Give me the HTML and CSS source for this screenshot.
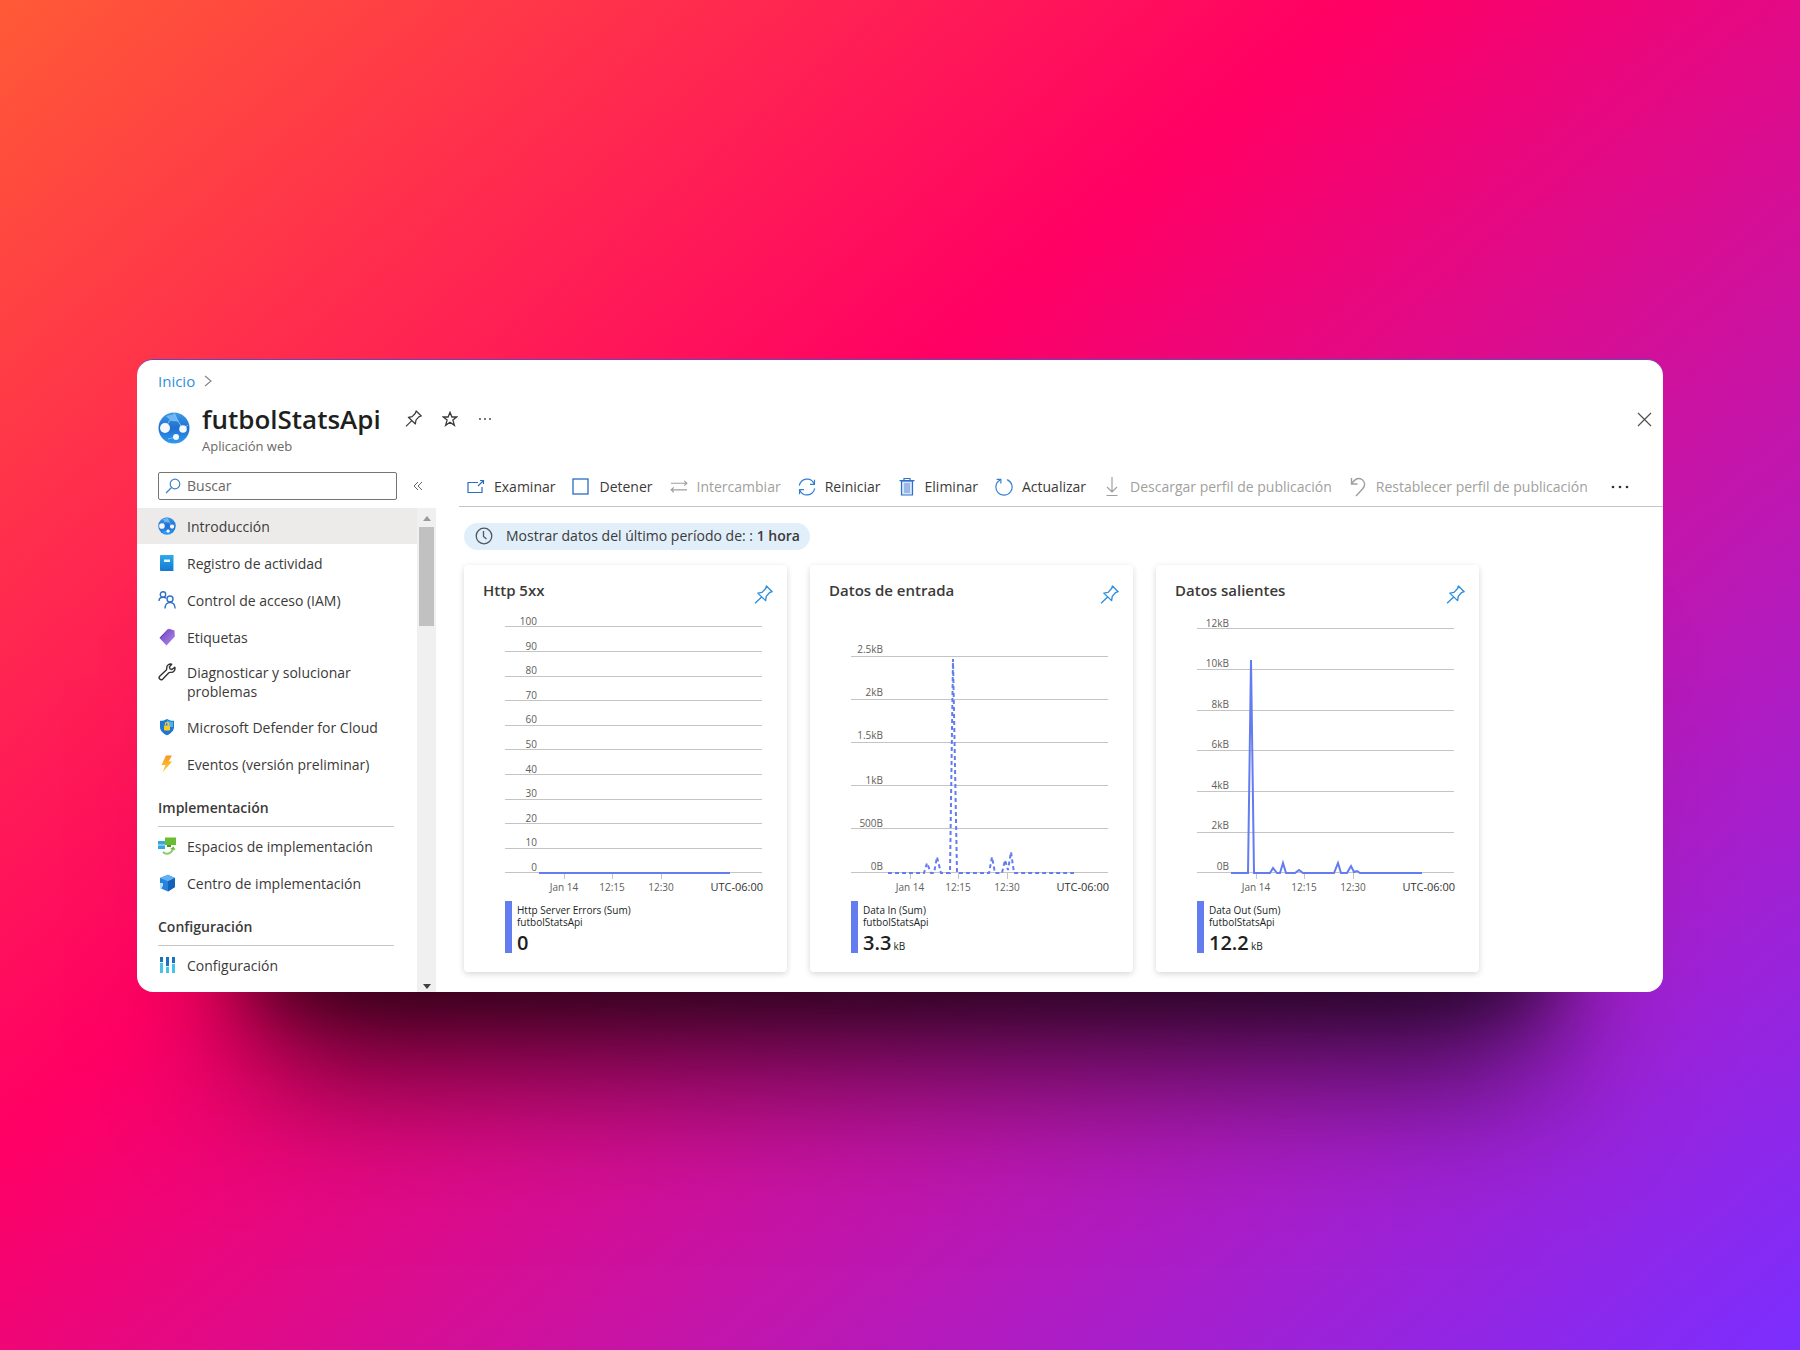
FILE: index.html
```html
<!DOCTYPE html>
<html lang="es">
<head>
<meta charset="utf-8">
<meta name="viewport" content="width=device-width, initial-scale=1">
<title>futbolStatsApi</title>
<link rel="stylesheet" href="styles.css">
</head>
<body>
<svg class="defs" width="0" height="0" aria-hidden="true">
  <defs>
    <linearGradient id="g-globe" x1="0" y1="0" x2="0" y2="1"><stop offset="0" stop-color="#3d9be6"/><stop offset=".5" stop-color="#1f6fd0"/><stop offset="1" stop-color="#2f9af0"/></linearGradient>
    <linearGradient id="g-book" x1="0" y1="0" x2="0" y2="1"><stop offset="0" stop-color="#2fa9ea"/><stop offset="1" stop-color="#1478cf"/></linearGradient>
    <linearGradient id="g-tag" x1="0" y1="0" x2="1" y2="1"><stop offset="0" stop-color="#6a3fc0"/><stop offset="1" stop-color="#b48be8"/></linearGradient>
    <linearGradient id="g-bolt" x1="0" y1="0" x2="0" y2="1"><stop offset="0" stop-color="#f8961e"/><stop offset="1" stop-color="#ffd23c"/></linearGradient>
    <symbol id="globe" viewBox="0 0 32 32">
      <circle cx="16" cy="16" r="15.500" fill="url(#g-globe)"/>
      <path d="M8 4 12 8 20 9 17 2z" fill="#6fb6f2"/>
      <path d="M7 16 12 8 20 9 25 17M16 1l4 8M25 17l5-4M18 25l-8 2" fill="none" stroke="#7fc0f6" stroke-width="1"/>
      <circle cx="7" cy="16" r="5" fill="#f4f8fd"/><circle cx="25" cy="17" r="3.800" fill="#f4f8fd"/><circle cx="18" cy="25" r="3" fill="#f4f8fd"/>
    </symbol>
    <symbol id="pin" viewBox="0 0 18 18">
      <path d="M1 17.300 7 11.500M11.800 1 17.200 6.300 14.600 7.300 11.600 10.800 11 14.800 3.600 7.700 7.600 7 11 3.400z" fill="none" stroke="currentColor" stroke-width="1.300" stroke-linejoin="round"/>
    </symbol>
  </defs>
</svg>

<main class="window">
  <header class="header">
    <nav class="crumbs" aria-label="Ruta">
      <a href="#">Inicio</a>
      <svg width="8" height="12" viewBox="0 0 8 12"><path d="M1 1l6 5-6 5" fill="none" stroke="#8a8886" stroke-width="1.200"/></svg>
    </nav>
    <div class="heading">
      <svg class="heading-logo" width="32" height="32"><use href="#globe"/></svg>
      <div class="heading-text">
        <div class="title-row">
          <h1>futbolStatsApi</h1>
          <div class="title-tools">
            <button type="button" aria-label="Anclar"><svg width="17" height="17"><use href="#pin"/></svg></button>
            <button type="button" aria-label="Favorito"><svg width="16" height="16" viewBox="0 0 16 16"><path d="M8 1.300 9.900 6h4.800l-3.800 3.100 1.500 5.200L8 11.200l-4.400 3.100 1.500-5.200L1.300 6h4.800z" fill="none" stroke="currentColor" stroke-width="1.300"/></svg></button>
            <button type="button" aria-label="Más"><svg width="14" height="4" viewBox="0 0 14 4"><g fill="currentColor"><circle cx="2" cy="2" r=".9"/><circle cx="7" cy="2" r=".9"/><circle cx="12" cy="2" r=".9"/></g></svg></button>
          </div>
        </div>
        <p class="subtitle">Aplicación web</p>
      </div>
      <button type="button" class="close" aria-label="Cerrar"><svg width="15" height="15" viewBox="0 0 15 15"><path d="M1 1l13 13M14 1 1 14" stroke="currentColor" stroke-width="1.200"/></svg></button>
    </div>
  </header>

  <div class="body">
    <aside class="sidebar">
      <div class="search-row">
        <label class="search">
          <svg width="16" height="16" viewBox="0 0 16 16"><path d="M1 15l5.500-5.500" stroke="#3b82d0" stroke-width="1.300"/><circle cx="10" cy="6" r="4.800" fill="none" stroke="#3b82d0" stroke-width="1.200"/></svg>
          <input type="search" placeholder="Buscar" aria-label="Buscar">
        </label>
        <button type="button" class="collapse" aria-label="Contraer"><svg width="10" height="10" viewBox="0 0 10 10"><path d="M5 1 1 5l4 4M9 1 5 5l4 4" fill="none" stroke="currentColor" stroke-width="1"/></svg></button>
      </div>
      <div class="nav-area">
        <nav class="menu" aria-label="Menú del recurso">
          <a href="#" class="item active"><svg width="18" height="18"><use href="#globe"/></svg>Introducción</a>
          <a href="#" class="item"><svg width="18" height="18" viewBox="0 0 18 18"><path d="M3 1h12v16H3a1 1 0 0 1-1-1V2a1 1 0 0 1 1-1z" fill="url(#g-book)"/><path d="M15 1h1v16h-1z" fill="#8fd0f5"/><path d="M6 5.500h6v2.500H6z" fill="#e6f4fd"/></svg>Registro de actividad</a>
          <a href="#" class="item"><svg width="18" height="18" viewBox="0 0 18 18"><g fill="none" stroke="#2f6fc8" stroke-width="1.400"><circle cx="5" cy="3.500" r="2.700"/><path d="M1 10c0-2.500 1.500-3.800 4-3.800 1.500 0 2.500.4 3 1"/><circle cx="12" cy="8" r="3"/><path d="M7 17.500c0-3.700 1.800-6 5-6s5 2.300 5.200 6"/></g></svg>Control de acceso (IAM)</a>
          <a href="#" class="item"><svg width="18" height="18" viewBox="0 0 18 18"><path d="M11 .8l5.500 1.700.3 6L8.500 17.500 1.500 10z" fill="url(#g-tag)"/><path d="M11 .8 3 9.500 1.500 10 9.500 1.500z" fill="#4f2a9c"/></svg>Etiquetas</a>
          <a href="#" class="item"><svg width="18" height="18" viewBox="0 0 18 18"><path d="M16.800 4.200 14 6.500l-2-.6-.6-2L13.700 1.200C11.500.5 8.500 2 8.700 5.300c0 .9.1 1.200-.4 1.700L1.700 13.300c-1.700 1.800 1 4.700 2.900 2.900l6.200-6.400c.6-.6 1-.5 1.800-.4 3.400.2 4.900-2.700 4.200-5.200z" fill="none" stroke="#323130" stroke-width="1.400" stroke-linejoin="round"/></svg>Diagnosticar y solucionar problemas</a>
          <a href="#" class="item"><svg width="18" height="18" viewBox="0 0 18 18"><path d="M9 1c2 1.300 4.300 1.800 7 1.800V9c0 4-3.500 6.700-7 8.300C5.500 15.700 2 13 2 9V2.800C4.700 2.800 7 2.300 9 1z" fill="#1f78cf"/><path d="M9 2.200c1.800 1 3.800 1.500 6 1.600V9H9z" fill="#4fb3ee"/><rect x="6" y="7.500" width="6" height="5" rx="1" fill="#ffca28"/><path d="M7.300 7.500V6.300a1.700 1.700 0 0 1 3.400 0v1.200" fill="none" stroke="#ffca28" stroke-width="1.200"/></svg>Microsoft Defender for Cloud</a>
          <a href="#" class="item"><svg width="18" height="18" viewBox="0 0 18 18"><path d="M8 .5h6L10.500 6.500H14L4.500 17.500 7.500 10H3.500z" fill="url(#g-bolt)"/></svg>Eventos (versión preliminar)</a>
          <h2>Implementación</h2>
          <a href="#" class="item"><svg width="18" height="18" viewBox="0 0 18 18"><path d="M0 4h7v8H0z" fill="#35a7e3"/><path d="M0 7.500h7v1H0z" fill="#c5e8f8"/><path d="M7 .5h11v7.500H7z" fill="#69bd35"/><path d="M9 8h4v2H9z" fill="#4b9a25"/><path d="M5 15c2.500 2.800 8.500 2.300 10-3.500" fill="none" stroke="#8fcb6c" stroke-width="2"/><path d="M12 12l3.500-2.500L17.500 13z" fill="#69bd35"/></svg>Espacios de implementación</a>
          <a href="#" class="item"><svg width="18" height="18" viewBox="0 0 18 18"><path d="M10 .8 17 4v9l-7 4.500L2 14V4z" fill="#2583dc"/><path d="M10 .8 17 4 10 7.200 2 4z" fill="#62b2f3"/><path d="M10 7.200 17 4v9l-7 4.500z" fill="#1560b8"/><path d="M2 9h3v3.500H4v2L2 14z" fill="#b7dcfa"/></svg>Centro de implementación</a>
          <h2>Configuración</h2>
          <a href="#" class="item"><svg width="18" height="18" viewBox="0 0 18 18"><path d="M2 1h3v16H2zM8 1h3v16H8zM14 1h3v16h-3z" fill="#45c3e8"/><path d="M2 1h3v5H2zM8 1h3v9H8zM14 1h3v6h-3z" fill="#1a72b8"/><path d="M2 6h3v1H2zM8 10h3v1H8zM14 7h3v1h-3z" fill="#d9f1fa"/></svg>Configuración</a>
        </nav>
        <div class="scrollbar" aria-hidden="true">
          <span class="arrow-up"></span>
          <span class="thumb"></span>
          <span class="arrow-down"></span>
        </div>
      </div>
    </aside>

    <section class="main">
      <div class="toolbar" role="toolbar" aria-label="Comandos">
        <button type="button"><svg width="18" height="18" viewBox="0 0 18 18"><path d="M11 4.500H1v10h14V9M11 8l5-5M13 2.500H16.500V6" fill="none" stroke="#2b6cc4" stroke-width="1.200"/></svg>Examinar</button>
        <button type="button"><svg width="18" height="18" viewBox="0 0 18 18"><rect x="1" y="1" width="15" height="15" fill="none" stroke="#2b6cc4" stroke-width="1.300"/></svg>Detener</button>
        <button type="button" disabled><svg width="19" height="18" viewBox="0 0 19 18"><path d="M1 5h17M15 2.500 17.800 5 15 7.500M18 12H1M4 9.500 1.200 12 4 14.500" fill="none" stroke="currentColor" stroke-width="1.200"/></svg>Intercambiar</button>
        <button type="button"><svg width="20" height="20" viewBox="0 0 20 20"><path d="M1.500 8.500C3 .5 14-2 18 6.500M18.300 2v5h-5M18.500 11.500C17 19.500 6 22 2 13.500M1.700 18v-5h5" fill="none" stroke="#2f7fd6" stroke-width="1.300"/></svg>Reiniciar</button>
        <button type="button"><svg width="16" height="20" viewBox="0 0 16 20"><path d="M2.500 4h11v14h-11z" fill="#d6e6f8" stroke="#2f6fc8" stroke-width="1.200"/><path d="M.5 3.700h15M5 3.500V1.500h6v2" fill="none" stroke="#2f6fc8" stroke-width="1.200"/><path d="M5 6v10h6V6z" fill="#9db8ea"/></svg>Eliminar</button>
        <button type="button"><svg width="20" height="20" viewBox="0 0 20 20"><path d="M13.500 1.800A9 9 0 1 1 5.500 2.300M1.800 1.500h4.700v4.700" fill="none" stroke="#2f7fd6" stroke-width="1.300"/></svg>Actualizar</button>
        <button type="button" disabled><svg width="14" height="20" viewBox="0 0 14 20"><path d="M7 0v15M2 10l5 5 5-5M1.500 18.500h11" fill="none" stroke="currentColor" stroke-width="1.200"/></svg>Descargar perfil de publicación</button>
        <button type="button" disabled><svg width="16" height="20" viewBox="0 0 16 20"><path d="M1.500 1v6h6M1.700 6.500C5 2 9 .5 12 2.500c3.500 2.500 3.300 6.500.5 9.500L6 19" fill="none" stroke="currentColor" stroke-width="1.400"/></svg>Restablecer perfil de publicación</button>
        <button type="button" class="more" aria-label="Más comandos"><svg width="20" height="4" viewBox="0 0 20 4"><g fill="#323130"><circle cx="4" cy="2" r="1.300"/><circle cx="11" cy="2" r="1.300"/><circle cx="18" cy="2" r="1.300"/></g></svg></button>
      </div>

      <div class="content">
        <button type="button" class="range">
          <svg width="18" height="18" viewBox="0 0 18 18"><circle cx="9" cy="9" r="7.800" fill="none" stroke="#51565c" stroke-width="1.300"/><path d="M8.500 4v5.500l3 2.500" fill="none" stroke="#51565c" stroke-width="1.300"/></svg>
          <span>Mostrar datos del último período de: : <b>1 hora</b></span>
        </button>

        <div class="cards">
          <article class="card">
            <header><h3>Http 5xx</h3><button type="button" aria-label="Anclar gráfico"><svg width="19" height="19"><use href="#pin"/></svg></button></header>
            <svg class="chart" viewBox="0 0 323 286" role="img" aria-label="Http Server Errors">
              <path class="grid" d="M41 16.500h257M41 41.500h257M41 66.500h257M41 90.500h257M41 115.500h257M41 139.500h257M41 164.500h257M41 189.500h257M41 213.500h257M41 238.500h257M41 262.500h257M100.500 263v6M148.500 263v6M197.500 263v6"/>
              <g class="ylab"><text x="73" y="15">100</text><text x="73" y="40">90</text><text x="73" y="64">80</text><text x="73" y="89">70</text><text x="73" y="113">60</text><text x="73" y="138">50</text><text x="73" y="163">40</text><text x="73" y="187">30</text><text x="73" y="212">20</text><text x="73" y="236">10</text><text x="73" y="261">0</text></g>
              <g class="xlab"><text x="100" y="281">Jan 14</text><text x="148" y="281">12:15</text><text x="197" y="281">12:30</text></g>
              <text class="zone" x="299" y="281">UTC-06:00</text>
              <path class="series" d="M75 263H266"/>
            </svg>
            <div class="legend"><span>Http Server Errors (Sum)</span><span>futbolStatsApi</span><strong>0</strong></div>
          </article>

          <article class="card">
            <header><h3>Datos de entrada</h3><button type="button" aria-label="Anclar gráfico"><svg width="19" height="19"><use href="#pin"/></svg></button></header>
            <svg class="chart" viewBox="0 0 323 286" role="img" aria-label="Data In">
              <path class="grid" d="M41 46.500h257M41 89.500h257M41 132.500h257M41 175.500h257M41 218.500h257M41 262.500h257M100.500 263v6M148.500 263v6M197.500 263v6"/>
              <g class="ylab"><text x="73" y="43">2.5kB</text><text x="73" y="86">2kB</text><text x="73" y="129">1.5kB</text><text x="73" y="174">1kB</text><text x="73" y="217">500B</text><text x="73" y="260">0B</text></g>
              <g class="xlab"><text x="100" y="281">Jan 14</text><text x="148" y="281">12:15</text><text x="197" y="281">12:30</text></g>
              <text class="zone" x="299" y="281">UTC-06:00</text>
              <path class="series dotted" d="M78 263H114L117 253 121 263H124L127 247 131 263H140L143 49 147 263H179L182 247 185 263H192L195 250 198 260 201 242 204 263H264"/>
            </svg>
            <div class="legend"><span>Data In (Sum)</span><span>futbolStatsApi</span><strong>3.3 <small>kB</small></strong></div>
          </article>

          <article class="card">
            <header><h3>Datos salientes</h3><button type="button" aria-label="Anclar gráfico"><svg width="19" height="19"><use href="#pin"/></svg></button></header>
            <svg class="chart" viewBox="0 0 323 286" role="img" aria-label="Data Out">
              <path class="grid" d="M41 18.500h257M41 59.500h257M41 100.500h257M41 140.500h257M41 181.500h257M41 222.500h257M41 262.500h257M100.500 263v6M148.500 263v6M197.500 263v6"/>
              <g class="ylab"><text x="73" y="17">12kB</text><text x="73" y="57">10kB</text><text x="73" y="98">8kB</text><text x="73" y="138">6kB</text><text x="73" y="179">4kB</text><text x="73" y="219">2kB</text><text x="73" y="260">0B</text></g>
              <g class="xlab"><text x="100" y="281">Jan 14</text><text x="148" y="281">12:15</text><text x="197" y="281">12:30</text></g>
              <text class="zone" x="299" y="281">UTC-06:00</text>
              <path class="series" d="M75 263H92L95 50 98 263H114L117 258 121 263H124L127 253 130 263H139L143 260 147 263H178L182 253 185 263H191L195 256 198 262 201 261 204 263H266"/>
            </svg>
            <div class="legend"><span>Data Out (Sum)</span><span>futbolStatsApi</span><strong>12.2 <small>kB</small></strong></div>
          </article>
        </div>
      </div>
    </section>
  </div>
</main>
</body>
</html>
```
FILE: styles.css
```css
* {
  box-sizing: border-box;
}

body {
  margin: 0;
  min-height: 100vh;
  padding: 48px 137px;
  display: flex;
  align-items: center;
  background: linear-gradient(140deg, #ff5a36 0%, #ff0064 40%, #7b2eff 100%);
  font: 14px/20px "Open Sans", "Noto Sans", sans-serif;
  color: #3b3a39;
}

.defs {
  position: absolute;
}

svg {
  display: block;
  flex: none;
}

h1,
h2,
h3,
p {
  margin: 0;
}

a {
  color: inherit;
  text-decoration: none;
}

button {
  display: flex;
  align-items: center;
  padding: 0;
  border: 0;
  background: none;
  font: inherit;
  color: inherit;
}

.window {
  width: 100%;
  border-top: 1px solid #6a45b4;
  border-radius: 16px;
  background: #fff;
  box-shadow:
    0 130px 60px -115px rgba(0, 0, 0, 0.4),
    0 200px 130px -120px rgba(0, 0, 0, 0.7);
}

/* Header */

.header {
  padding: 11px 11px 0 21px;
}

.crumbs {
  display: flex;
  align-items: center;
  gap: 9px;
  font-size: 15px;
}

.crumbs a {
  color: #2f8fdc;
}

.heading {
  display: flex;
  align-items: flex-start;
  padding-top: 10px;
  height: 81px;
}

.heading-logo {
  margin-top: 11px;
}

.heading-text {
  flex: 1;
  margin-left: 12px;
}

.title-row {
  display: flex;
  align-items: center;
}

h1 {
  font-size: 26px;
  line-height: 36px;
  font-weight: 600;
  color: #201f1e;
}

.title-tools {
  display: flex;
  align-items: center;
  gap: 20px;
  margin-left: 24px;
}

.subtitle {
  font-size: 13px;
  line-height: 18px;
  color: #6a6866;
}

.close {
  margin-top: 11px;
  color: #51504e;
}

/* Sidebar */

.body {
  display: flex;
  align-items: stretch;
}

.sidebar {
  width: 299px;
  flex: none;
  display: flex;
  flex-direction: column;
}

.search-row {
  display: flex;
  align-items: flex-start;
  height: 36px;
  padding-left: 21px;
}

.search {
  display: flex;
  align-items: center;
  gap: 6px;
  width: 239px;
  height: 28px;
  padding: 0 6px;
  border: 1px solid #767573;
  border-radius: 2px;
}

.search input {
  flex: 1;
  min-width: 0;
  padding: 0;
  border: 0;
  outline: 0;
  background: none;
  font: inherit;
  color: inherit;
}

.search input::placeholder {
  color: #6a6866;
  opacity: 1;
}

.collapse {
  height: 28px;
  margin-left: 16px;
  color: #6a6866;
}

.nav-area {
  flex: 1;
  display: flex;
}

.menu {
  flex: 1;
  display: flex;
  flex-direction: column;
  gap: 1px;
}

.item {
  display: flex;
  align-items: flex-start;
  gap: 11px;
  min-height: 36px;
  padding: 9px 32px 8px 21px;
  line-height: 19px;
}

.item:nth-child(5) {
  padding-top: 7px;
  padding-bottom: 7px;
}

.item.active {
  background: #edebe9;
}

.menu h2 {
  margin: 0 23px 0 21px;
  padding: 15px 0 8px;
  border-bottom: 1px solid #c8c6c4;
  font-size: 14px;
  line-height: 20px;
  font-weight: 600;
}

.scrollbar {
  width: 19px;
  display: flex;
  flex-direction: column;
  align-items: center;
  padding: 8px 0 3px;
  background: #f0f0f0;
}

.arrow-up,
.arrow-down {
  border: 4px solid transparent;
  border-top-width: 0;
  border-bottom: 5px solid #9a9a9a;
}

.arrow-down {
  margin-top: auto;
  border-bottom-width: 0;
  border-top: 5px solid #404040;
}

.thumb {
  width: 15px;
  height: 99px;
  margin-top: 6px;
  background: #c1c1c1;
}

/* Toolbar */

.main {
  flex: 1;
  min-width: 0;
  padding-left: 23px;
}

.toolbar {
  display: flex;
  gap: 17px;
  height: 35px;
  padding: 0 0 4px 8px;
  border-bottom: 1px solid #c8c6c4;
}

.toolbar button {
  gap: 9px;
  white-space: nowrap;
}

.toolbar button svg {
  width: 18px;
}

.toolbar button:disabled {
  color: #a19f9d;
}

.toolbar .more {
  margin-left: 4px;
}

.toolbar .more svg {
  width: 20px;
}

.content {
  padding: 16px 5px 20px;
}

.range {
  gap: 13px;
  height: 27px;
  padding: 0 10px 0 11px;
  border-radius: 14px;
  background: #e1effa;
}

.range b {
  font-weight: 600;
}

/* Metric cards */

.cards {
  display: flex;
  flex-wrap: wrap;
  gap: 23px;
  margin-top: 15px;
}

.card {
  width: 323px;
  padding-bottom: 19px;
  border-radius: 4px;
  background: #fff;
  box-shadow: 0 2px 6px rgba(0, 0, 0, 0.16);
}

.card header {
  display: flex;
  justify-content: space-between;
  align-items: flex-start;
  height: 45px;
  padding: 15px 14px 0 19px;
}

.card h3 {
  font-size: 15px;
  line-height: 20px;
  font-weight: 600;
}

.card header button {
  margin-top: 5px;
  color: #2f8fdc;
}

.chart {
  width: 100%;
  font-size: 10px;
  fill: #605e5c;
}

.grid {
  fill: none;
  stroke: #c4c4c4;
}

.ylab {
  text-anchor: end;
}

.xlab {
  text-anchor: middle;
}

.zone {
  font-size: 11px;
  text-anchor: end;
  fill: #323130;
}

.series {
  fill: none;
  stroke: #637cef;
  stroke-width: 2;
}

.dotted {
  stroke-dasharray: 4 3;
}

.legend {
  display: flex;
  flex-direction: column;
  height: 52px;
  margin: 5px 18px 0 41px;
  padding: 3px 0 0 5px;
  border-left: 7px solid #637cef;
  font-size: 10px;
  line-height: 12px;
  color: #201f1e;
}

.legend strong {
  font-size: 20px;
  line-height: 30px;
  font-weight: 600;
}

.legend small {
  margin-left: -3px;
  font-size: 10px;
  font-weight: 400;
}
```
